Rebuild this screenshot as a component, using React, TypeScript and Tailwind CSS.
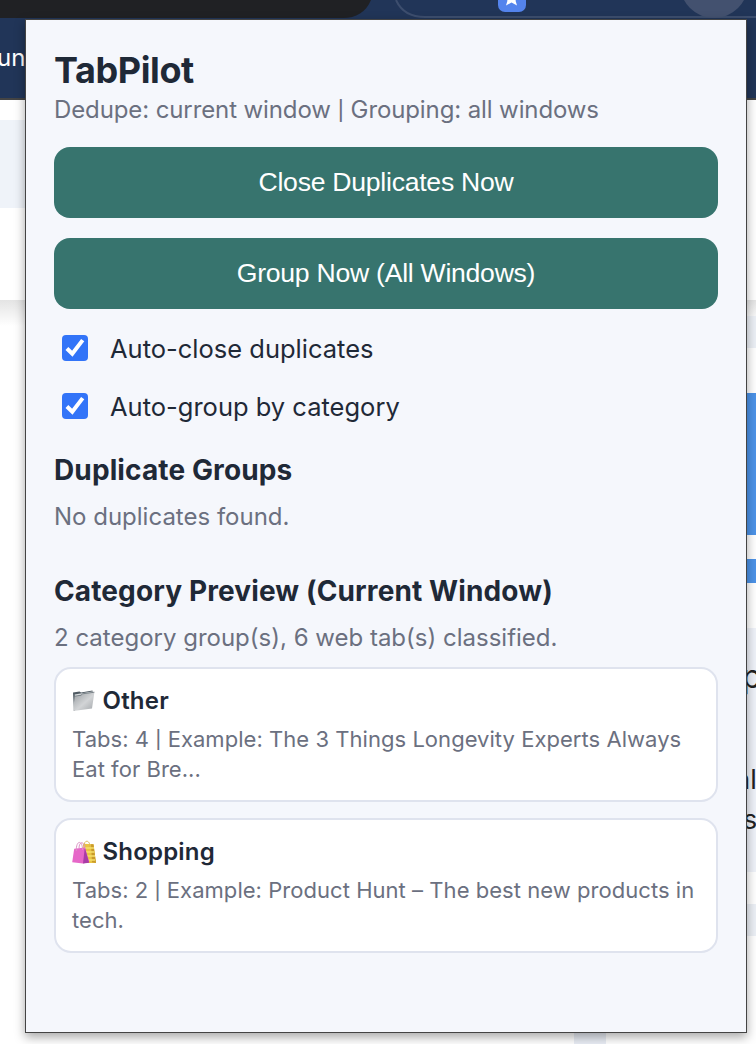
import { useState } from "react";

interface Category {
  name: string;
  icon: "folder" | "bags";
  count: number;
  example: string;
}

const categories: Category[] = [
  {
    name: "Other",
    icon: "folder",
    count: 4,
    example: "The 3 Things Longevity Experts Always Eat for Bre...",
  },
  {
    name: "Shopping",
    icon: "bags",
    count: 2,
    example: "Product Hunt – The best new products in tech.",
  },
];

function FolderIcon() {
  return (
    <svg width="24" height="24" viewBox="0 0 24 24" className="shrink-0">
      <defs>
        <linearGradient id="folder" x1="0" y1="0" x2="1" y2="1">
          <stop offset="0" stopColor="#989da1" />
          <stop offset="0.55" stopColor="#d2d4d6" />
          <stop offset="1" stopColor="#a2a6aa" />
        </linearGradient>
      </defs>
      <path d="M1 3.4 7.5 2.4l1.5 1.2L20.500 1.500v5L2 22Z" fill="#4f5a62" />
      <path d="M2.600 5.400 20 2.600v2L3 7.500Z" fill="#d9dcde" />
      <path d="M1.200 22 2.600 7.200l6.400-1 1.500-1.400L22.400 3.200 20 19.500Z" fill="url(#folder)" />
      <path d="M2.600 7.200l6.400-1 1.500-1.400L22.400 3.200" fill="none" stroke="#6a737a" strokeWidth="0.8" />
    </svg>
  );
}

function BagsIcon() {
  return (
    <svg width="24" height="24" viewBox="0 0 24 24" className="shrink-0">
      <path d="M11 3.800 21.500 4.200 24 23H12Z" fill="#e9c443" />
      <path d="m19 4.200 2.500 0L24 23l-4-.8Z" fill="#c99a2b" />
      <path d="M13 8h9M13 12h9.500M13 16h10M13 20h10" stroke="#f5df6b" strokeWidth="1.4" />
      <path d="M12 6C12-.5 18-.5 18 7" fill="none" stroke="#d9b65a" strokeWidth="1" />
      <path d="M2.200 8.700 13 7.500 17.200 22 11 23.500.2 22.300Z" fill="#e667c8" />
      <path d="m12.800 7.500 4.400 15.200-6.200.8Z" fill="#a93ca6" />
      <path d="M4.300 11C4-.5 10.500 0 10.600 10M7 8.500C7 .5 12.500 1 13 9" fill="none" stroke="#dc93c5" strokeWidth="1" />
    </svg>
  );
}

function Separator() {
  return <span className="relative -top-px text-[0.8em] leading-none font-medium">|</span>;
}

function CheckRow({ label }: { label: string }) {
  const [checked, setChecked] = useState(true);

  return (
    <label className="flex h-[58px] items-center pl-2 text-[25.5px] leading-[30px]">
      <input type="checkbox" className="sr-only" checked={checked} onChange={() => setChecked(!checked)} />
      <span className="mr-[22px] flex size-[26px] shrink-0 items-center justify-center rounded-[4px] bg-[#3274f8]">
        {checked && (
          <svg width="26" height="26" viewBox="0 0 26 26">
            <path d="m4.900 13.500 5.400 5.300L20.700 5.100" fill="none" stroke="#fff" strokeWidth="4" />
          </svg>
        )}
      </span>
      <span className="pt-0.5 whitespace-nowrap">{label}</span>
    </label>
  );
}

function CategoryCard({ category }: { category: Category }) {
  return (
    <article className="h-[135px] rounded-[17px] border-2 border-[#dfe3ee] bg-white px-4 pt-[17px]">
      <h3 className="flex items-center gap-[6.500px] text-2xl leading-[30px] font-semibold tracking-[0.2px]">
        {category.icon === "folder" ? <FolderIcon /> : <BagsIcon />}
        {category.name}
      </h3>
      <p className="-mr-2 mt-2 text-[22px] leading-[30px] tracking-[0.04px] text-[#6b7080]">
        Tabs: {category.count} <Separator /> Example: {category.example}
      </p>
    </article>
  );
}

// Slice of the browser toolbar and page that shows around the popup
function Backdrop() {
  return (
    <div className="flex h-full flex-col bg-white font-[Inter,sans-serif]">
      <header className="h-[100px] shrink-0 border-b-2 border-[#444] bg-[#213558]">
        <svg width="756" height="20" viewBox="0 0 756 20">
          <path d="M0 0h371c-5 12-15 18-28 18H0Z" fill="#202124" />
          <path d="M396 0c5 11 15 17 29 17h331" fill="none" stroke="#3d4e6e" strokeWidth="2" />
          <circle cx="714" cy="-16" r="34" fill="#43516f" />
          <rect x="498" y="-16" width="28" height="28" rx="7" fill="#5484ed" />
          <path d="m511.500-10 2.500 6 6 .5-4.500 4 1.500 5-5.500-3-5.500 3 1.500-5-4.500-4 6-.5Z" fill="#fff" />
        </svg>
        <p className="mt-[23px] -ml-[3px] text-2xl leading-[30px] text-white">un</p>
      </header>
      <div className="flex grow justify-between">
        <div className="w-[25px]">
          <div className="mt-5 h-[88px] bg-[#eff3f9]" />
          <div className="h-[92px]" />
          <div className="h-[26px] bg-linear-to-b from-[#e4e4e4] to-white" />
        </div>
        <div className="mt-auto mr-auto ml-[549px] h-[44px] w-8 bg-[#e9edf5]" />
        <div className="w-[10px] overflow-hidden text-[#222]">
          <div className="h-[200px]" />
          <div className="h-4 bg-linear-to-b from-[#e4e4e4] to-[#f8f8f8]" />
          <div className="h-8 bg-[#ecf0f6]" />
          <div className="mt-[45px] h-[142px] bg-[#4c93e8]" />
          <div className="mt-6 h-6 bg-[#4c93e8]" />
          <div className="mt-[45px] h-[244px] bg-[#eff2f9] text-[27px] leading-10">
            <p className="-ml-1 pt-[29px] text-[32px]">p</p>
            <p className="-ml-[11px] pt-[63px] whitespace-nowrap">al</p>
            <p className="-ml-[3px]">s</p>
          </div>
          <div className="mt-8 h-8 bg-[#ecf0f6]" />
        </div>
      </div>
    </div>
  );
}

function App() {
  return (
    <div className="relative h-[1044px] w-[756px] overflow-hidden">
      <Backdrop />

      <main className="absolute top-[19px] left-[25px] h-[1014px] w-[722px] border border-[#444] bg-[#f5f7fc] px-7 pt-7 font-[Inter,sans-serif] text-[#1f2937] shadow-[0_4px_10px_rgba(0,0,0,0.35)]">
        <h1 className="text-4xl leading-[44px] font-bold tracking-[-0.4px]">TabPilot</h1>
        <p className="mt-[3px] text-2xl leading-[30px] tracking-[-0.11px] whitespace-nowrap text-[#6b7080]">
          Dedupe: current window <Separator /> Grouping: all windows
        </p>

        <div className="mt-[22px] flex flex-col gap-5 font-['Liberation_Sans',sans-serif] text-[26.6px] tracking-[-0.26px] text-white">
          <button className="h-[71px] rounded-2xl bg-[#37746e]">Close Duplicates Now</button>
          <button className="h-[71px] rounded-2xl bg-[#37746e]">Group Now (All Windows)</button>
        </div>

        <div className="mt-[10px]">
          <CheckRow label="Auto-close duplicates" />
          <CheckRow label="Auto-group by category" />
        </div>

        <section className="mt-[18px]">
          <h2 className="text-[28px] leading-[34px] font-bold tracking-[0.12px]">Duplicate Groups</h2>
          <p className="mt-[15px] text-2xl leading-[30px] text-[#6b7080]">No duplicates found.</p>
        </section>

        <section className="mt-[42px]">
          <h2 className="text-[28px] leading-[34px] font-bold tracking-[0.12px] whitespace-nowrap">
            Category Preview (Current Window)
          </h2>
          <p className="mt-[15px] text-2xl leading-[30px] text-[#6b7080]">2 category group(s), 6 web tab(s) classified.</p>
          <div className="mt-[14px] flex flex-col gap-4">
            {categories.map((category) => (
              <CategoryCard key={category.name} category={category} />
            ))}
          </div>
        </section>
      </main>
    </div>
  );
}

export default App;
